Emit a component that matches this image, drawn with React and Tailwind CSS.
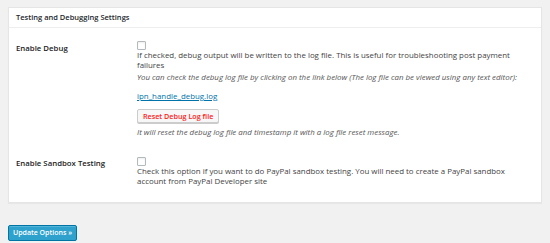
import React from "react";

export default function App() {
  return (
    <div className="w-[550px] h-[243px] overflow-hidden bg-[#f1f1f1] px-[8px] pt-[7px] font-['Open_Sans',sans-serif] text-[#444]">
      {/* Settings postbox */}
      <div className="bg-white border border-[#e5e5e5] shadow-[0_1px_1px_rgba(0,0,0,0.04)]">
        <div className="h-[20px] border-b border-[#eeeeee] px-[7px] flex items-center text-[7.5px] font-semibold text-[#23282d]">
          Testing and Debugging Settings
        </div>

        <div className="px-[7px] pt-[13px] pb-[16px]">
          {/* Enable Debug */}
          <div className="flex items-start">
            <div className="w-[121px] shrink-0 pt-[2px] text-[7.8px] leading-[10px] font-semibold text-[#222]">
              Enable Debug
            </div>
            <div className="flex flex-col items-start text-[7.9px] leading-[10px]">
              <span className="block w-[9px] h-[9px] border border-[#b4b9be] rounded-[1px] bg-white shadow-[inset_0_1px_2px_rgba(0,0,0,0.07)]" />
              <p className="text-[#444]">
                If checked, debug output will be written to the log file. This is useful for troubleshooting post payment
                <br />
                failures
              </p>
              <p className="mt-[2px] italic text-[#555]">
                You can check the debug log file by clicking on the link below (The log file can be viewed using any text editor):
              </p>
              <a className="mt-[9px] text-[#0073aa] underline">ipn_handle_debug.log</a>
              <button className="mt-[8px] h-[14px] px-[5px] border border-[#cccccc] rounded-[2px] bg-[#f7f7f7] shadow-[0_1px_0_#ccc] text-[7.2px] font-semibold text-[#ff1a1a]">
                Reset Debug Log file
              </button>
              <p className="mt-[4px] italic text-[#555]">
                It will reset the debug log file and timestamp it with a log file reset message.
              </p>
            </div>
          </div>

          {/* Enable Sandbox Testing */}
          <div className="flex items-start mt-[20px]">
            <div className="w-[121px] shrink-0 pt-[1px] text-[7.8px] leading-[10px] font-semibold text-[#222]">
              Enable Sandbox Testing
            </div>
            <div className="flex flex-col items-start text-[7.9px] leading-[10px]">
              <span className="block w-[9px] h-[9px] border border-[#b4b9be] rounded-[1px] bg-white shadow-[inset_0_1px_2px_rgba(0,0,0,0.07)]" />
              <p className="text-[#444]">
                Check this option if you want to do PayPal sandbox testing. You will need to create a PayPal sandbox
                <br />
                account from PayPal Developer site
              </p>
            </div>
          </div>
        </div>
      </div>

      <button className="mt-[22px] h-[16px] px-[4px] rounded-[2px] border border-[#0074a2] bg-[#2ea2cc] shadow-[inset_0_1px_0_rgba(120,200,230,0.5)] text-[7px] font-semibold text-white">
        Update Options »
      </button>
    </div>
  );
}
